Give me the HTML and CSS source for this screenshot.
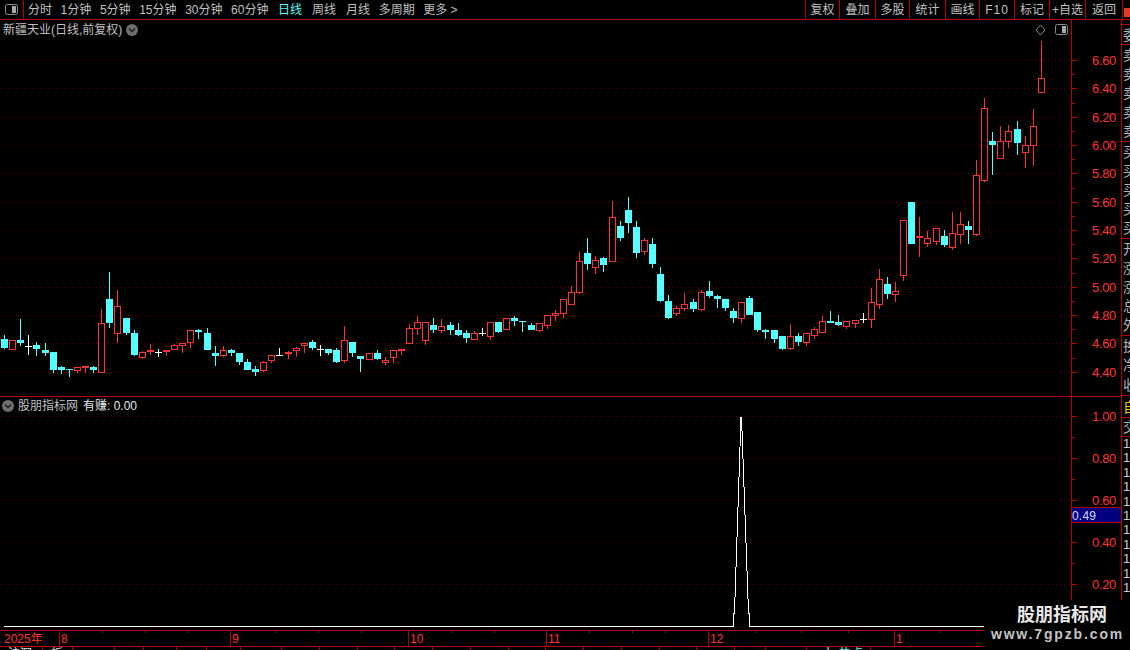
FILE: index.html
```html
<!DOCTYPE html>
<html lang="zh-CN">
<head>
<meta charset="utf-8">
<title>新疆天业</title>
<link rel="stylesheet" href="styles.css">
</head>
<body>
<div class="app">
  <header class="toolbar">
    <div class="layout-btn">
      <svg class="icon-layout" width="13" height="11" viewBox="0 0 13 11"><rect class="i-frame" x="0.5" y="0.5" width="12" height="10" rx="2"/><rect class="i-fill" x="7" y="2" width="4" height="7"/></svg>
    </div>
    <nav class="periods">
      <span>分时</span><span>1分钟</span><span>5分钟</span><span>15分钟</span><span>30分钟</span><span>60分钟</span>
      <span class="active">日线</span><span class="wide">周线</span><span class="wide">月线</span><span>多周期</span><span>更多 &gt;</span>
    </nav>
    <div class="actions">
      <span>复权</span><span>叠加</span><span>多股</span><span>统计</span><span>画线</span><span class="f10">F10</span><span>标记</span><span>+自选</span><span>返回</span><span class="chip"><i></i></span>
    </div>
  </header>
  <div class="workspace">
    <main class="charts">
      <section class="panel panel-main">
        <div class="title">
          <span class="stock">新疆天业(日线,前复权)</span>
          <svg class="chev" width="12" height="12" viewBox="0 0 12 12"><circle cx="6" cy="6" r="6"/><path d="M3 4.5 L6 7.5 L9 4.5"/></svg>
        </div>
        <div class="corner">
          <svg width="34" height="12" viewBox="0 0 34 12"><path class="diamond" d="M5.5 1 L10 6 L5.5 11 L1 6 Z"/><rect class="i-frame" x="20.5" y="0.5" width="12" height="10" rx="2"/><rect class="i-fill" x="27" y="2" width="4" height="7"/></svg>
        </div>
        <svg id="main-chart" class="plot" width="1121" height="377" viewBox="0 20 1121 377"></svg>
      </section>
      <section class="panel panel-sub">
        <div class="title title-sub">
          <svg class="chev" width="12" height="12" viewBox="0 0 12 12"><circle cx="6" cy="6" r="6"/><path d="M3 4.5 L6 7.5 L9 4.5"/></svg>
          <span class="stock">股朋指标网</span>
          <span class="value">有赚: 0.00</span>
        </div>
        <svg id="sub-chart" class="plot" width="1121" height="233" viewBox="0 397 1121 233"></svg>
      </section>
    </main>
    <aside class="side">
      <div class="cell c-gap"></div>
      <div class="cell c-one"><span>委</span></div>
      <div class="cell c-five"><span>卖</span><span>卖</span><span>卖</span><span>卖</span><span>卖</span></div>
      <div class="cell c-five"><span>买</span><span>买</span><span>买</span><span>买</span><span>买</span></div>
      <div class="cell c-five"><span>开</span><span>涨</span><span>涨</span><span>总</span><span>外</span></div>
      <div class="cell c-three"><span>换</span><span>净</span><span>收</span></div>
      <div class="cell c-yellow"><span>自</span></div>
      <div class="cell c-one2"><span>交</span></div>
      <div class="nums"><span>1</span><span>1</span><span>1</span><span>1</span><span>1</span><span>1</span><span>1</span><span>1</span><span>1</span><span>1</span><span>1</span></div>
    </aside>
  </div>
  <svg id="date-axis" class="dates" width="1130" height="17" viewBox="0 630 1130 17"></svg>
  <footer class="tabs">
    <span>沪深</span><span>板</span><span></span><span></span><span></span><span></span><span></span><span></span>
    <span></span><span></span><span></span><span></span><span></span><span></span><span></span><span></span><span></span><span></span><span></span><span></span>
    <span></span><span></span><span class="tab-hot">十<b class="cy">热点</b></span><span></span>
  </footer>
  <div class="watermark">
    <div class="wm-cn">股朋指标网</div>
    <div class="wm-url">www.7gpzb.com</div>
  </div>
</div>
<script src="chart.js"></script>
</body>
</html>
```
FILE: styles.css
```css
* { box-sizing: border-box; }
html, body { margin: 0; padding: 0; background: #000; }
body { font: 12px/1 "Liberation Sans", "Noto Sans CJK SC", sans-serif; color: #c0c0c0; }
.app { position: relative; width: 1130px; height: 650px; overflow: hidden; background: #000; }

.toolbar { display: flex; height: 20px; border-bottom: 1px solid #b80000; }
.layout-btn { width: 24px; border-right: 1px solid #b80000; display: flex; align-items: center; justify-content: center; }
.i-frame { fill: none; stroke: #8c8c8c; }
.i-fill { fill: #a8a8a8; }
.periods { display: flex; gap: 8.6px; padding-left: 4px; align-items: center; white-space: nowrap; }
.periods .active { color: #54ffff; margin-left: 1px; }
.periods .wide { margin-left: 1.4px; }
.actions { margin-left: auto; display: grid; grid-template-columns: 34px 36px 34px 36px 34px 35px 35px 36px 37px 8px; }
.actions span { border-left: 1px solid #b80000; display: flex; align-items: center; justify-content: center; white-space: nowrap; }
.actions .f10 { letter-spacing: 1px; }
.chip { align-items: flex-end !important; }
.chip i { display: block; width: 6px; height: 9px; margin: 0 0 2px 1px; background: #d8402c; }

.workspace { display: flex; height: 610px; }
.charts { width: 1121px; display: flex; flex-direction: column; }
.panel { position: relative; }
.panel-main { height: 377px; }
.panel-sub { height: 233px; }
.plot { display: block; }
.title { position: absolute; left: 3px; top: 3px; display: flex; align-items: center; gap: 4px; height: 13px; white-space: nowrap; }
.title-sub { left: 2px; top: 2px; }
.title-sub .value { color: #e8e8e8; margin-left: 1px; }
.chev circle { fill: #6e6e6e; }
.chev path { fill: none; stroke: #1c1c1c; stroke-width: 1.4; }
.corner { position: absolute; left: 1035px; top: 4px; line-height: 0; }
.diamond { fill: none; stroke: #8c8c8c; }

.side { width: 9px; border-left: 1px solid #b80000; overflow: hidden; }
.cell { display: flex; flex-direction: column; border-bottom: 1px solid #b80000; padding-left: 1px; color: #b4b4b4; }
.cell span, .nums span { white-space: nowrap; }
.c-gap { height: 5px; }
.c-one { height: 20px; justify-content: center; font-size: 14px; }
.c-five { height: 97px; justify-content: space-around; font-size: 14px; }
.c-three { height: 60px; justify-content: space-around; font-size: 14px; }
.c-yellow { height: 22px; justify-content: center; color: #e0d000; font-size: 14px; }
.c-one2 { height: 19px; justify-content: center; font-size: 14px; }
.nums { display: flex; flex-direction: column; gap: 1.4px; padding-left: 1px; font-size: 13px; color: #d0d0d0; }

.dates { display: block; }
.tabs { display: grid; grid-template-columns: 43px 30px 42px 29px 33px 30px 34px 41px repeat(12, 37.75px) 31px 41px 64px 1fr; height: 3px; overflow: hidden; }
.tabs span { border-right: 1px solid #b80000; padding: 1px 0 0 8px; color: #e8e8e8; white-space: nowrap; }
.tabs .tab-hot { padding-left: 15px; }
.cy { color: #54ffff; font-weight: normal; margin-left: 5px; }

.watermark { position: absolute; left: 984px; top: 600px; width: 146px; height: 50px; background: #000; text-align: center; }
.wm-cn { font: bold 18px/26px "Noto Sans CJK SC", sans-serif; color: #e8e8e8; padding-left: 10px; }
.wm-url { font: bold 14px/16px "Liberation Sans", sans-serif; letter-spacing: 1.85px; color: #c4c4c4; padding-left: 1px; }

/* chart marks */
.grid { stroke: #6c0000; stroke-dasharray: 1 3; stroke-width: 1; }
.axis { stroke: #b80000; stroke-width: 1; }
.lbl { fill: #ff3232; font: 13px "Liberation Sans", sans-serif; letter-spacing: -0.35px; }
.lbl-date { fill: #ff3232; font: 12px "Liberation Sans", "Noto Sans CJK SC", sans-serif; }
.wick-r { stroke: #ff3232; } .wick-c { stroke: #54ffff; } .wick-w { stroke: #fff; }
.body-r { fill: none; stroke: #ff3232; }
.solid-r { fill: #ff3232; }
.body-c { fill: #54ffff; }
.line { fill: none; stroke: #fff; stroke-width: 1; shape-rendering: crispEdges; }
.hl { fill: #000080; }
.hl-edge { stroke: #b80000; }
.hl-txt { fill: #d8d8ff; font: 12px "Liberation Sans", sans-serif; letter-spacing: 0.2px; }
```
FILE: chart.js
```js
var D = [
[335,339,348,349,'c'],[340,340,350,350,'r'],[319,340,343,346,'c'],[335,346,346,355,'w'],[342,345,349,356,'c'],[343,350,353,356,'c'],[352,352,370,373,'c'],[366,367,370,374,'c'],[369,369,370,377,'c'],[367,367,371,373,'r'],
[366,366,368,373,'r'],[366,367,370,373,'c'],[309,323,373,373,'r'],[272,299,323,328,'c'],[290,306,334,343,'r'],[318,318,333,335,'c'],[330,333,355,356,'c'],[351,352,358,359,'r'],[344,350,352,355,'r'],[349,352,352,357,'w'],
[350,350,352,356,'r'],[344,345,350,350,'r'],[343,343,346,353,'r'],[330,330,343,348,'r'],[329,330,332,339,'c'],[328,333,350,350,'c'],[346,353,356,366,'c'],[346,350,356,357,'r'],[349,350,353,356,'c'],[353,353,362,365,'c'],
[359,362,370,370,'c'],[366,369,372,376,'c'],[361,362,371,372,'r'],[355,355,361,363,'r'],[348,355,355,356,'w'],[351,352,354,359,'r'],[347,348,351,357,'r'],[343,343,346,353,'r'],[340,342,348,350,'c'],[345,349,349,356,'w'],
[349,349,353,355,'c'],[348,350,362,363,'c'],[326,340,361,363,'r'],[342,342,353,357,'c'],[356,356,359,372,'c'],[353,353,360,360,'r'],[350,353,359,360,'c'],[357,360,363,365,'r'],[350,350,358,363,'r'],[349,349,351,355,'r'],
[324,328,344,344,'r'],[316,322,329,335,'r'],[322,322,341,345,'r'],[318,325,330,333,'c'],[319,326,331,333,'r'],[322,325,330,335,'c'],[323,330,335,336,'c'],[330,333,338,343,'c'],[331,333,340,340,'r'],[328,333,333,336,'w'],
[322,322,337,340,'r'],[322,322,332,333,'c'],[318,318,330,330,'r'],[316,318,321,326,'c'],[321,321,322,332,'c'],[323,325,330,330,'c'],[323,323,331,332,'r'],[315,315,326,329,'r'],[310,313,316,321,'r'],[299,299,314,318,'r'],
[286,292,305,305,'r'],[252,261,293,294,'r'],[238,253,264,270,'c'],[256,260,268,274,'r'],[257,258,265,272,'c'],[201,217,262,262,'r'],[221,226,238,241,'c'],[197,210,223,233,'c'],[221,227,253,258,'c'],[238,240,252,255,'r'],
[238,244,264,268,'c'],[267,274,301,302,'c'],[295,301,318,319,'c'],[306,308,314,316,'r'],[293,304,309,311,'r'],[299,302,309,312,'c'],[290,292,310,311,'r'],[281,291,296,298,'c'],[295,296,299,308,'c'],[299,299,308,311,'c'],
[308,311,318,323,'c'],[302,302,319,323,'r'],[296,298,315,315,'c'],[312,312,330,332,'c'],[329,330,332,339,'c'],[330,330,339,343,'c'],[336,336,349,350,'c'],[324,336,349,350,'r'],[333,336,342,346,'c'],[333,333,343,346,'r'],
[327,329,336,339,'r'],[316,321,333,333,'r'],[311,321,323,323,'c'],[315,322,325,326,'c'],[321,321,327,329,'r'],[320,320,324,328,'r'],[313,319,319,323,'w'],[288,302,320,328,'r'],[269,279,305,309,'r'],[277,284,294,299,'c'],
[282,291,295,302,'r'],[220,220,276,281,'r'],[202,202,244,244,'c'],[217,236,238,257,'r'],[231,238,244,247,'r'],[228,228,242,245,'r'],[230,236,245,247,'c'],[212,233,248,250,'r'],[212,224,235,244,'r'],[221,226,230,244,'c'],
[160,175,235,236,'r'],[98,108,181,182,'r'],[132,141,145,175,'c'],[126,141,159,159,'r'],[125,131,142,148,'r'],[121,129,143,155,'c'],[136,145,153,168,'r'],[109,126,146,166,'r'],[41,78,93,93,'r']
];
var PRICE = [[60,'6.60'],[88,'6.40'],[117,'6.20'],[145,'6.00'],[173,'5.80'],[202,'5.60'],[230,'5.40'],[258,'5.20'],[287,'5.00'],[315,'4.80'],[343,'4.60'],[372,'4.40']];
var SUB = [[416,'1.00'],[458,'0.80'],[500,'0.60'],[542,'0.40'],[584,'0.20']];

function ln(x1, y1, x2, y2, c) { return '<line x1="' + x1 + '" y1="' + y1 + '" x2="' + x2 + '" y2="' + y2 + '" class="' + c + '"/>'; }
function rc(x, y, w, h, c) { return '<rect x="' + x + '" y="' + y + '" width="' + w + '" height="' + h + '" class="' + c + '"/>'; }
function tx(x, y, t, c) { return '<text x="' + x + '" y="' + y + '" class="' + c + '">' + t + '</text>'; }

function scale(rows, top, bottom) {
  var s = ln(1071.5, top, 1071.5, bottom, 'axis');
  rows.forEach(function (r, i) {
    var y = r[0] + 0.5;
    s += ln(0, y, 1068, y, 'grid');
    s += ln(1072, y, 1077, y, 'axis');
    if (i + 1 < rows.length) {
      var m = Math.round((r[0] + rows[i + 1][0]) / 2) + 0.5;
      s += ln(1072, m, 1075, m, 'axis');
    }
    s += tx(1092, r[0] + 5, r[1], 'lbl');
  });
  return s;
}

var main = scale(PRICE, 20, 397);
D.forEach(function (d, i) {
  var c = Math.floor(4.5 + 8.1 * i), wx = c + 0.5, t = d[4];
  if (t === 'w') {
    main += ln(wx, d[0], wx, d[3], 'wick-w') + ln(c - 3, d[1] + 0.5, c + 4, d[1] + 0.5, 'wick-w');
  } else if (t === 'c') {
    main += ln(wx, d[0], wx, d[3], 'wick-c') + rc(c - 3, d[1], 7, d[2] - d[1], 'body-c');
  } else {
    if (d[0] < d[1]) main += ln(wx, d[0], wx, d[1], 'wick-r');
    if (d[3] > d[2]) main += ln(wx, d[2], wx, d[3], 'wick-r');
    if (d[2] - d[1] <= 2) main += rc(c - 3, d[1], 7, d[2] - d[1], 'solid-r');
    else main += rc(c - 2.5, d[1] + 0.5, 6, d[2] - d[1] - 1, 'body-r');
  }
});
main += ln(1071, 396.5, 1121, 396.5, 'axis') + ln(0, 396.5, 1071, 396.5, 'axis');
document.getElementById('main-chart').innerHTML = main;

var sub = scale(SUB, 397, 630);
sub += rc(1072, 507, 49, 16, 'hl') + ln(1072, 507.5, 1121, 507.5, 'hl-edge') + ln(1072, 522.5, 1121, 522.5, 'hl-edge');
sub += tx(1072, 520, '0.49', 'hl-txt');
sub += '<polyline class="line" points="4,626.5 733.5,626.5 733.5,613 734.5,613 741,417 741.5,417 748.5,613 749.5,613 749.5,626.5 1000,626.5"/>';
document.getElementById('sub-chart').innerHTML = sub;

var dates = ln(0, 630.5, 1130, 630.5, 'axis') + ln(0, 646.5, 1130, 646.5, 'axis');
dates += tx(4, 643, '2025年', 'lbl-date');
[[59, '8'], [230, '9'], [408, '10'], [546, '11'], [708, '12'], [894, '1']].forEach(function (m) {
  dates += ln(m[0] + 0.5, 631, m[0] + 0.5, 646, 'axis') + tx(m[0] + 2, 643, m[1], 'lbl-date');
});
[102, 145, 187, 275, 318, 361, 451, 494, 589, 632, 665, 755, 801, 848, 940].forEach(function (x) {
  dates += ln(x + 0.5, 631, x + 0.5, 633, 'axis');
});
document.getElementById('date-axis').innerHTML = dates;
```
